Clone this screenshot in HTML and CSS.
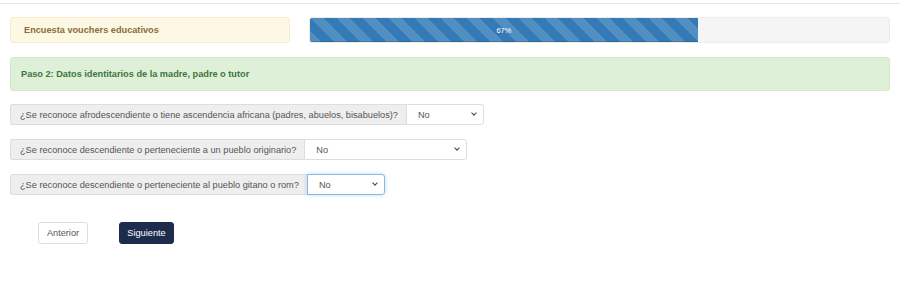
FILE: index.html
```html
<!DOCTYPE html>
<html lang="es">
<head>
    <meta charset="UTF-8">
    <meta name="viewport" content="width=device-width, initial-scale=1.0">
    <title>Encuesta vouchers educativos</title>
    <link rel="stylesheet" href="styles.css">
</head>
<body>
    <div class="top-bar"></div>

    <div class="container">
        <div class="header-row">
            <div class="alert alert-warning">Encuesta vouchers educativos</div>
            <div class="progress">
                <div class="progress-bar" style="width: 67%;">67%</div>
            </div>
        </div>

        <div class="alert alert-success step-title">Paso 2: Datos identitarios de la madre, padre o tutor</div>

        <form class="survey">
            <div class="input-group">
                <span class="addon">¿Se reconoce afrodescendiente o tiene ascendencia africana (padres, abuelos, bisabuelos)?</span>
                <div class="select-wrap w-short">
                    <select class="form-control">
                        <option>No</option>
                        <option>Sí</option>
                    </select>
                </div>
            </div>

            <div class="input-group">
                <span class="addon">¿Se reconoce descendiente o perteneciente a un pueblo originario?</span>
                <div class="select-wrap w-long">
                    <select class="form-control">
                        <option>No</option>
                        <option>Sí</option>
                    </select>
                </div>
            </div>

            <div class="input-group">
                <span class="addon">¿Se reconoce descendiente o perteneciente al pueblo gitano o rom?</span>
                <div class="select-wrap w-short focused">
                    <select class="form-control">
                        <option>No</option>
                        <option>Sí</option>
                    </select>
                </div>
            </div>

            <div class="actions">
                <button type="button" class="btn btn-default">Anterior</button>
                <button type="button" class="btn btn-primary">Siguiente</button>
            </div>
        </form>
    </div>
</body>
</html>
```

FILE: styles.css
```css
body {
    font-family: 'Liberation Sans', Arial, sans-serif;
    font-size: 9.2px;
    color: #555;
    background-color: #fff;
    margin: 0;
    padding: 0;
}

.top-bar {
    height: 3px;
    border-bottom: 1px solid #e6e6e6;
}

.container {
    padding: 0 10px;
}

.header-row {
    display: flex;
    gap: 19px;
    margin-top: 13px;
}

.alert {
    box-sizing: border-box;
    border: 1px solid transparent;
    border-radius: 3px;
    font-weight: bold;
    display: flex;
    align-items: center;
}

.alert-warning {
    width: 280px;
    height: 26px;
    padding: 0 13px;
    background-color: #fcf8e3;
    border-color: #faebcc;
    color: #8a6d3b;
}

.progress {
    flex: 1;
    height: 26px;
    box-sizing: border-box;
    background-color: #f5f5f5;
    border: 1px solid #ececec;
    border-radius: 3px;
    overflow: hidden;
    display: flex;
}

.progress-bar {
    background-color: #337ab7;
    background-image: linear-gradient(45deg, rgba(255, 255, 255, 0.15) 25%, transparent 25%, transparent 50%, rgba(255, 255, 255, 0.15) 50%, rgba(255, 255, 255, 0.15) 75%, transparent 75%, transparent);
    background-size: 26px 26px;
    color: #fff;
    font-size: 7.5px;
    display: flex;
    align-items: center;
    justify-content: center;
    box-shadow: inset 0 -1px 0 rgba(0, 0, 0, 0.15);
}

.step-title {
    margin-top: 14px;
    height: 34px;
    padding: 0 10px;
    background-color: #dff0d8;
    border-color: #d6e9c6;
    color: #3c763d;
}

.survey {
    margin-top: 13px;
}

.input-group {
    display: flex;
    height: 21px;
    margin-bottom: 14px;
}

.addon {
    box-sizing: border-box;
    display: flex;
    align-items: center;
    padding: 0 8px 0 9px;
    background-color: #eee;
    border: 1px solid #ddd;
    border-right: none;
    border-radius: 3px 0 0 3px;
    color: #555;
}

.select-wrap {
    position: relative;
}

.select-wrap::after {
    content: '';
    position: absolute;
    right: 8px;
    top: 7px;
    width: 3px;
    height: 3px;
    border-right: 1.5px solid #444;
    border-bottom: 1.5px solid #444;
    transform: rotate(45deg);
    pointer-events: none;
}

.w-short {
    width: 78px;
}

.w-long {
    width: 163px;
}

.form-control {
    appearance: none;
    -webkit-appearance: none;
    box-sizing: border-box;
    width: 100%;
    height: 21px;
    padding: 0 0 0 11px;
    font-family: inherit;
    font-size: 9.2px;
    color: #555;
    background-color: #fff;
    border: 1px solid #ddd;
    border-radius: 0 3px 3px 0;
    outline: none;
}

.focused .form-control {
    border-color: #8ab8e0;
    box-shadow: 0 0 4px rgba(102, 175, 233, 0.45);
}

.actions {
    display: flex;
    gap: 31px;
    margin-top: 27px;
    padding-left: 28px;
}

.btn {
    box-sizing: border-box;
    height: 22px;
    padding: 0 6px;
    font-family: inherit;
    font-size: 9.2px;
    border: 1px solid transparent;
    border-radius: 3px;
    cursor: pointer;
}

.btn-default {
    width: 50px;
    background-color: #fff;
    border-color: #ddd;
    color: #555;
}

.btn-primary {
    width: 55px;
    background-color: #1d2b4c;
    border-color: #1d2b4c;
    color: #fff;
}
```
